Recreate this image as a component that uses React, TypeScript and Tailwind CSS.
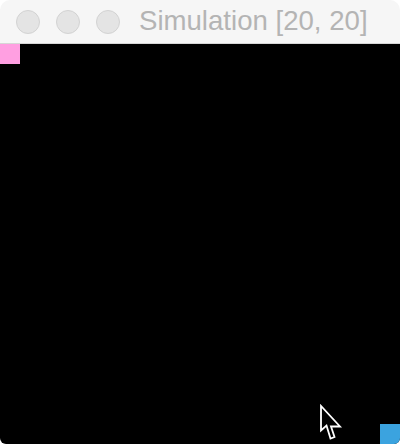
import React from "react";

function Cursor() {
  return (
    <svg
      width="28"
      height="40"
      viewBox="0 0 28 40"
      className="absolute left-[319px] top-[404px]"
    >
      <path
        d="M2 2 L2 26.5 L7.5 21.5 L11.5 34.5 L15.5 33 L12 22.5 L21 22.5 Z"
        fill="#000"
        stroke="#fff"
        strokeWidth="1.8"
        strokeLinejoin="miter"
      />
    </svg>
  );
}

export default function App() {
  return (
    <div className="w-[400px] h-[444px] bg-white relative overflow-hidden">
      <div className="w-[400px] h-[444px] flex flex-col rounded-t-[10px] rounded-b-[6px] overflow-hidden">
        <div className="h-[44px] shrink-0 bg-[#f6f6f6] border-b border-[#d6d6d6] flex items-center">
          <div className="flex items-center gap-[16px] pl-[16px]">
            <div className="w-[24px] h-[24px] rounded-full bg-[#e4e4e4] border border-[#d2d2d2]" />
            <div className="w-[24px] h-[24px] rounded-full bg-[#e4e4e4] border border-[#d2d2d2]" />
            <div className="w-[24px] h-[24px] rounded-full bg-[#e4e4e4] border border-[#d2d2d2]" />
          </div>
          <div
            className="ml-[19px] text-[27.6px] leading-none text-[#b4b4b4] whitespace-nowrap mb-[1px]"
            style={{ fontFamily: '"Liberation Sans", Arial, sans-serif' }}
          >
            Simulation [20, 20]
          </div>
        </div>
        <div className="flex-1 bg-black flex flex-col justify-between">
          <div className="flex">
            <div className="w-[20px] h-[20px] bg-[#ff9fe1]" />
          </div>
          <div className="flex justify-end">
            <div className="w-[20px] h-[20px] bg-[#3ba3df]" />
          </div>
        </div>
      </div>
      <Cursor />
    </div>
  );
}
